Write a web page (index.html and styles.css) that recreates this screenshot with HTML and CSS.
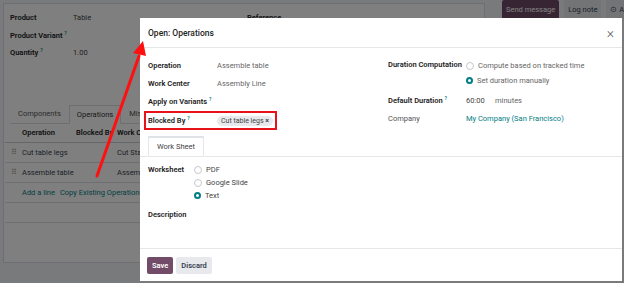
FILE: index.html
```html
<!DOCTYPE html>
<html>
<head lang="en">
    <meta charset="utf-8">
    <title>Open: Operations</title>
    <link rel="stylesheet" href="styles.css">
</head>
<body>
<div class="page">
    <div class="sheet">
        <div class="sheet-top">
            <div class="group">
                <div class="frow"><span class="flabel">Product</span><span class="fval">Table</span></div>
                <div class="frow"><span class="flabel">Product Variant <sup>?</sup></span></div>
                <div class="frow"><span class="flabel">Quantity <sup>?</sup></span><span class="fval">1.00</span></div>
            </div>
            <div class="group">
                <div class="frow"><span class="flabel">Reference</span></div>
            </div>
        </div>
        <ul class="bg-tabs">
            <li>Components</li>
            <li class="active">Operations</li>
            <li>Miscellaneous</li>
        </ul>
        <table class="bg-table">
            <tr><th></th><th>Operation</th><th>Blocked By</th><th>Work Center</th></tr>
            <tr><td class="handle">⠿</td><td>Cut table legs</td><td></td><td>Cut Station</td></tr>
            <tr><td class="handle">⠿</td><td>Assemble table</td><td></td><td>Assembly Line</td></tr>
            <tr><td></td><td colspan="3"><a class="link">Add a line</a><a class="link">Copy Existing Operations</a></td></tr>
            <tr><td></td><td colspan="3"></td></tr>
        </table>
    </div>
    <div class="chatter">
        <button class="btn-send">Send message</button>
        <button class="btn-light">Log note</button>
        <button class="btn-light">⊙ Activities</button>
    </div>
</div>

<div class="backdrop"></div>

<div class="modal">
    <div class="modal-header">
        <h4>Open: Operations</h4>
        <span class="close">×</span>
    </div>
    <div class="modal-body">
        <div class="cols">
            <div class="col">
                <div class="mrow"><span class="mlabel">Operation</span><span class="mval">Assemble table</span></div>
                <div class="mrow"><span class="mlabel">Work Center</span><span class="mval">Assembly Line</span></div>
                <div class="mrow"><span class="mlabel">Apply on Variants <sup>?</sup></span></div>
                <div class="mrow highlight"><span class="mlabel">Blocked By <sup>?</sup></span><span class="tag">Cut table legs <b>×</b></span></div>
            </div>
            <div class="col right">
                <div class="mrow top"><span class="mlabel">Duration Computation</span>
                    <div class="radios">
                        <label class="radio"><i></i>Compute based on tracked time</label>
                        <label class="radio on"><i></i>Set duration manually</label>
                    </div>
                </div>
                <div class="mrow"><span class="mlabel">Default Duration <sup>?</sup></span><span class="mval dark">60:00</span><span class="mval unit">minutes</span></div>
                <div class="mrow"><span class="mlabel light">Company</span><span class="mval link">My Company (San Francisco)</span></div>
            </div>
        </div>
        <div class="notebook">
            <span class="ntab">Work Sheet</span>
        </div>
        <div class="pane">
            <div class="mrow top"><span class="mlabel short">Worksheet</span>
                <div class="radios tight">
                    <label class="radio"><i></i>PDF</label>
                    <label class="radio"><i></i>Google Slide</label>
                    <label class="radio on"><i></i>Text</label>
                </div>
            </div>
            <div class="mrow desc"><span class="mlabel">Description</span></div>
        </div>
    </div>
    <div class="modal-footer">
        <button class="btn-save">Save</button>
        <button class="btn-discard">Discard</button>
    </div>
</div>

<svg class="arrow" width="624" height="283" viewBox="0 0 624 283">
    <line x1="97" y1="176" x2="139" y2="56" stroke="#ff1010" stroke-width="3" stroke-linecap="round"/>
    <polygon points="143,41 133,53 146,56" fill="#ff1010"/>
</svg>
</body>
</html>
```

FILE: styles.css
```css
body {
    margin: 0;
    width: 624px;
    height: 283px;
    overflow: hidden;
    background: #f3f4f6;
    font-family: Roboto, "Liberation Sans", sans-serif;
    font-size: 7.5px;
    color: #374151;
}

sup {
    font-size: 5px;
    color: #017e84;
    vertical-align: top;
    line-height: 1;
}

/* page under the dialog */
.page {
    display: flex;
    padding: 3px 0 0 3px;
}

.sheet {
    flex: none;
    width: 480px;
    height: 258px;
    background: #fff;
    border: 1px solid #dadde3;
}

.sheet-top {
    display: flex;
    padding: 5px 0 0 6px;
}

.group {
    width: 242px;
}

.frow {
    display: flex;
    height: 17.5px;
    align-items: center;
}

.flabel {
    width: 63px;
    font-weight: 600;
    color: #222;
}

.fval {
    color: #444;
}

.bg-tabs {
    display: flex;
    list-style: none;
    margin: 43px 0 0 6px;
    padding: 0;
    border-bottom: 1px solid #dadde3;
    height: 18px;
}

.bg-tabs li {
    padding: 0 8px;
    line-height: 18px;
    color: #555;
}

.bg-tabs li.active {
    border: 1px solid #dadde3;
    border-bottom-color: #fff;
    background: #fff;
    margin-bottom: -1px;
    padding: 0 7px;
    color: #333;
}

.bg-table {
    border-collapse: collapse;
    width: 478px;
    margin-left: 1px;
}

.bg-table td,
.bg-table th {
    height: 19px;
    padding: 0;
    text-align: left;
    border-bottom: 1px solid #dadde3;
    white-space: nowrap;
}

.bg-table th {
    height: 18px;
    font-weight: 600;
    color: #222;
    border-bottom: 1px solid #c9ccd2;
}

.bg-table th:nth-child(1), .bg-table td:nth-child(1) { width: 17px; }
.bg-table th:nth-child(2) { width: 54px; }
.bg-table th:nth-child(3) { width: 41px; }

.handle {
    color: #999;
    text-align: center !important;
    font-size: 8px;
}

.link {
    color: #017e84;
    margin-right: 5px;
}

.chatter {
    display: flex;
    gap: 5px;
    margin: -3px 0 0 17px;
    align-items: flex-start;
}

.chatter button {
    height: 19px;
    border: 0;
    border-radius: 2px;
    font: inherit;
    padding: 0 4px;
    white-space: nowrap;
}

.btn-send {
    background: #714b67;
    color: #fff;
}

.btn-light {
    background: #e7e9ed;
    color: #374151;
}

.backdrop {
    position: absolute;
    left: 0;
    top: 0;
    width: 624px;
    height: 283px;
    background: rgba(0, 0, 0, 0.5);
}

/* dialog */
.modal {
    position: absolute;
    left: 140px;
    top: 18px;
    width: 482px;
    height: 263px;
    background: #fff;
    display: flex;
    flex-direction: column;
}

.modal-header {
    display: flex;
    align-items: center;
    justify-content: space-between;
    height: 29px;
    padding: 0 8px;
    border-bottom: 1px solid #e5e7eb;
}

.modal-header h4 {
    margin: 0;
    font-size: 8.5px;
    font-weight: 500;
    color: #222;
}

.close {
    font-size: 14px;
    font-weight: 300;
    color: #555;
}

.modal-body {
    flex: 1;
    padding-top: 8px;
}

.cols {
    display: flex;
    padding: 0 8px;
}

.col {
    flex: none;
    width: 240px;
}

.col.right {
    flex: 1;
    width: auto;
}

.mrow {
    display: flex;
    align-items: center;
    min-height: 18px;
}

.mrow.top {
    align-items: flex-start;
}

.mrow.top .mlabel {
    line-height: 13px;
    margin-top: 2px;
}

.mlabel {
    width: 69px;
    flex: none;
    font-weight: 600;
    color: #222;
}

.col.right .mlabel {
    width: 78px;
}

.col.right .mrow.top {
    margin-bottom: 3px;
}

.mlabel.light {
    font-weight: 400;
    color: #555;
}

.mlabel.short {
    width: 46px;
}

.mval {
    color: #666;
}

.mval.dark {
    color: #444;
    width: 29px;
}

.mval.link {
    color: #017e84;
}

.highlight {
    margin-left: -4px;
    padding-left: 2px;
    width: 127px;
    height: 15px;
    min-height: 15px;
    border: 2px solid #e8131a;
    margin-top: 1px;
}

.tag {
    background: #e7e9ed;
    border-radius: 8px;
    padding: 1px 4px;
    font-size: 7px;
    color: #444;
}

.tag b {
    font-size: 7px;
}

.radios {
    display: flex;
    flex-direction: column;
    margin-top: 2px;
}

.radio {
    display: flex;
    align-items: center;
    gap: 4px;
    height: 15px;
    color: #666;
}

.radios.tight .radio {
    height: 13px;
    color: #444;
}

.radio i {
    width: 6px;
    height: 6px;
    border: 1px solid #c6c9ce;
    border-radius: 50%;
}

.radio.on i {
    width: 3px;
    height: 3px;
    border: 2.5px solid #017e84;
}

.notebook {
    margin-top: 7px;
    padding-left: 8px;
    border-bottom: 1px solid #e5e7eb;
    height: 19px;
}

.ntab {
    display: inline-block;
    line-height: 18px;
    padding: 0 8px;
    border: 1px solid #e5e7eb;
    border-top: 2px solid #dfe2e6;
    border-bottom-color: #fff;
    background: #fff;
    color: #444;
    box-sizing: border-box;
    height: 20px;
    margin-top: -1px;
}

.pane {
    padding: 4px 8px 0;
}

.desc {
    margin-top: 3px;
}

.modal-footer {
    display: flex;
    gap: 3px;
    padding: 8px 7px 7px;
    border-top: 1px solid #e5e7eb;
}

.modal-footer button {
    height: 17px;
    border: 0;
    border-radius: 2px;
    font: inherit;
    font-weight: 600;
    padding: 0 5px;
}

.btn-save {
    background: #714b67;
    color: #fff;
}

.btn-discard {
    background: #e7e9ed;
    color: #374151;
}

.arrow {
    position: absolute;
    left: 0;
    top: 0;
}
```
